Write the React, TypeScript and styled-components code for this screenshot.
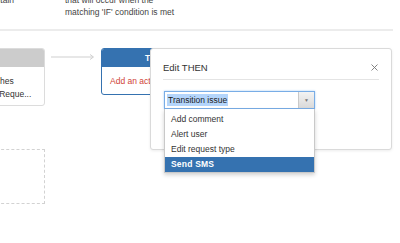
import * as React from 'react';
import styled, {createGlobalStyle} from 'styled-components';

const GlobalStyle = createGlobalStyle`
  html, body {
    margin: 0;
    padding: 0;
    background: #fff;
    overflow: hidden;
  }
  body {
    font-family: "Liberation Sans", Arial, sans-serif;
    color: #333;
  }
`;

const Page = styled.div`
  width: 400px;
  height: 243px;
  overflow: hidden;
`;

const DescRow = styled.div`
  display: flex;
  margin-top: -6px;
  width: 393px;
  padding-bottom: 11px;
  border-bottom: 2px solid #ececec;
  font-size: 8.5px;
  line-height: 12px;
  color: #444;
`;

const DescLeft = styled.div`
  width: 114px;
  margin-left: -100px;
  text-align: right;
  white-space: nowrap;
`;

const DescRight = styled.div`
  margin-left: 51px;
  white-space: nowrap;
`;

const Stage = styled.div`
  position: relative;
  padding-top: 17px;
`;

const CardRow = styled.div`
  display: flex;
  align-items: flex-start;
`;

const Card = styled.div<{ $accent?: string; $width: number }>`
  box-sizing: border-box;
  width: ${p => p.$width}px;
  border: 1px solid ${p => p.$accent || '#dcdcdc'};
  border-radius: 3px;
  overflow: hidden;
  background: #fff;
  font-size: 8.5px;
`;

const LeftCard = styled(Card)`
  margin-left: -50px;
`;

const CardHead = styled.div<{ $bg: string }>`
  height: 18px;
  line-height: 18px;
  background: ${p => p.$bg};
  color: #fff;
  font-weight: bold;
  text-align: center;
`;

const CardBody = styled.div<{ $color?: string; $bottom: number }>`
  padding: 8px 7px ${p => p.$bottom}px 8px;
  line-height: 13px;
  white-space: nowrap;
  color: ${p => p.$color || '#333'};
`;

const Arrow = styled.svg`
  display: block;
  margin: 5px 7px 0 6px;
`;

const DashedBox = styled.div`
  box-sizing: border-box;
  width: 95px;
  height: 55px;
  margin: 43px 0 0 -50px;
  border: 1px dashed #d2d2d2;
`;

const Dialog = styled.div`
  position: absolute;
  left: 150px;
  top: 17px;
  box-sizing: border-box;
  width: 242px;
  height: 102px;
  padding: 0 12px;
  background: #fff;
  border: 1px solid #dadada;
  border-radius: 3px;
  box-shadow: 0 1px 3px rgba(0, 0, 0, 0.08);
`;

const DialogHeader = styled.div`
  display: flex;
  justify-content: space-between;
  align-items: center;
  padding: 12px 0 5px;
  border-bottom: 1px solid #e4e4e4;
`;

const DialogTitle = styled.div`
  font-size: 9.5px;
  line-height: 13px;
  color: #333;
`;

const CloseIcon = styled.svg`
  display: block;
  margin-right: 1px;
`;

const SelectWrap = styled.div`
  position: relative;
  width: 151px;
  margin: 11px 0 0 1px;
  font-size: 8.5px;
`;

const SelectBox = styled.div`
  box-sizing: border-box;
  display: flex;
  align-items: center;
  height: 18px;
  background: #fff;
  border: 1px solid #79ade6;
  box-shadow: 0 0 2px #a9cdf3;
`;

const Selected = styled.span`
  margin-left: 2px;
  padding: 0 1px;
  line-height: 12px;
  background: #b4d5fb;
  color: #222;
`;

const SelectButton = styled.div`
  display: flex;
  align-items: center;
  justify-content: center;
  margin-left: auto;
  width: 15px;
  height: 100%;
  background: linear-gradient(#f3f3f3, #d9d9d9);
  border-left: 1px solid #c9c9c9;
  color: #777;
  font-size: 5px;
`;

const DropList = styled.ul`
  position: absolute;
  top: 100%;
  left: 0;
  right: 0;
  margin: 0;
  padding: 3px 0 0;
  list-style: none;
  background: #fff;
  border: 1px solid #c9c9c9;
  border-top: none;
  box-shadow: 0 2px 4px rgba(0, 0, 0, 0.18);
  z-index: 2;
`;

const Option = styled.li<{ $active?: boolean }>`
  height: 15px;
  line-height: 15px;
  padding-left: 6px;
  background: ${p => (p.$active ? '#3572b0' : 'transparent')};
  color: ${p => (p.$active ? '#fff' : '#333')};
  font-weight: ${p => (p.$active ? 'bold' : 'normal')};
  letter-spacing: ${p => (p.$active ? '0.2px' : '0')};
`;

const options = ['Add comment', 'Alert user', 'Edit request type', 'Send SMS'];

export default function App() {
    return (
        <Page>
            <GlobalStyle/>
            <DescRow>
                <DescLeft>the issue must contain</DescLeft>
                <DescRight>
                    that will occur when the<br/>
                    matching 'IF' condition is met
                </DescRight>
            </DescRow>

            <Stage>
                <CardRow>
                    <LeftCard $width={95}>
                        <CardHead $bg="#cccccc"/>
                        <CardBody $bottom={4}>
                            Issue matches<br/>
                            In Service Reque...
                        </CardBody>
                    </LeftCard>
                    <Arrow width="43" height="8" viewBox="0 0 43 8">
                        <line x1="0" y1="4" x2="42" y2="4" stroke="#cfcfcf" strokeWidth="1"/>
                        <path d="M39 1.5 L42.5 4 L39 6.5" fill="none" stroke="#cfcfcf" strokeWidth="1"/>
                    </Arrow>
                    <Card $width={111} $accent="#3572b0">
                        <CardHead $bg="#3572b0">THEN</CardHead>
                        <CardBody $color="#d04437" $bottom={6}>Add an action</CardBody>
                    </Card>
                </CardRow>

                <DashedBox/>

                <Dialog>
                    <DialogHeader>
                        <DialogTitle>Edit THEN</DialogTitle>
                        <CloseIcon width="7" height="7" viewBox="0 0 7 7">
                            <path d="M0.5 0.5 L6.5 6.5 M6.5 0.5 L0.5 6.5" stroke="#777" strokeWidth="0.9"/>
                        </CloseIcon>
                    </DialogHeader>
                    <SelectWrap>
                        <SelectBox>
                            <Selected>Transition issue</Selected>
                            <SelectButton>▼</SelectButton>
                        </SelectBox>
                        <DropList>
                            {options.map(o => (
                                <Option key={o} $active={o === 'Send SMS'}>{o}</Option>
                            ))}
                        </DropList>
                    </SelectWrap>
                </Dialog>
            </Stage>
        </Page>
    );
}
